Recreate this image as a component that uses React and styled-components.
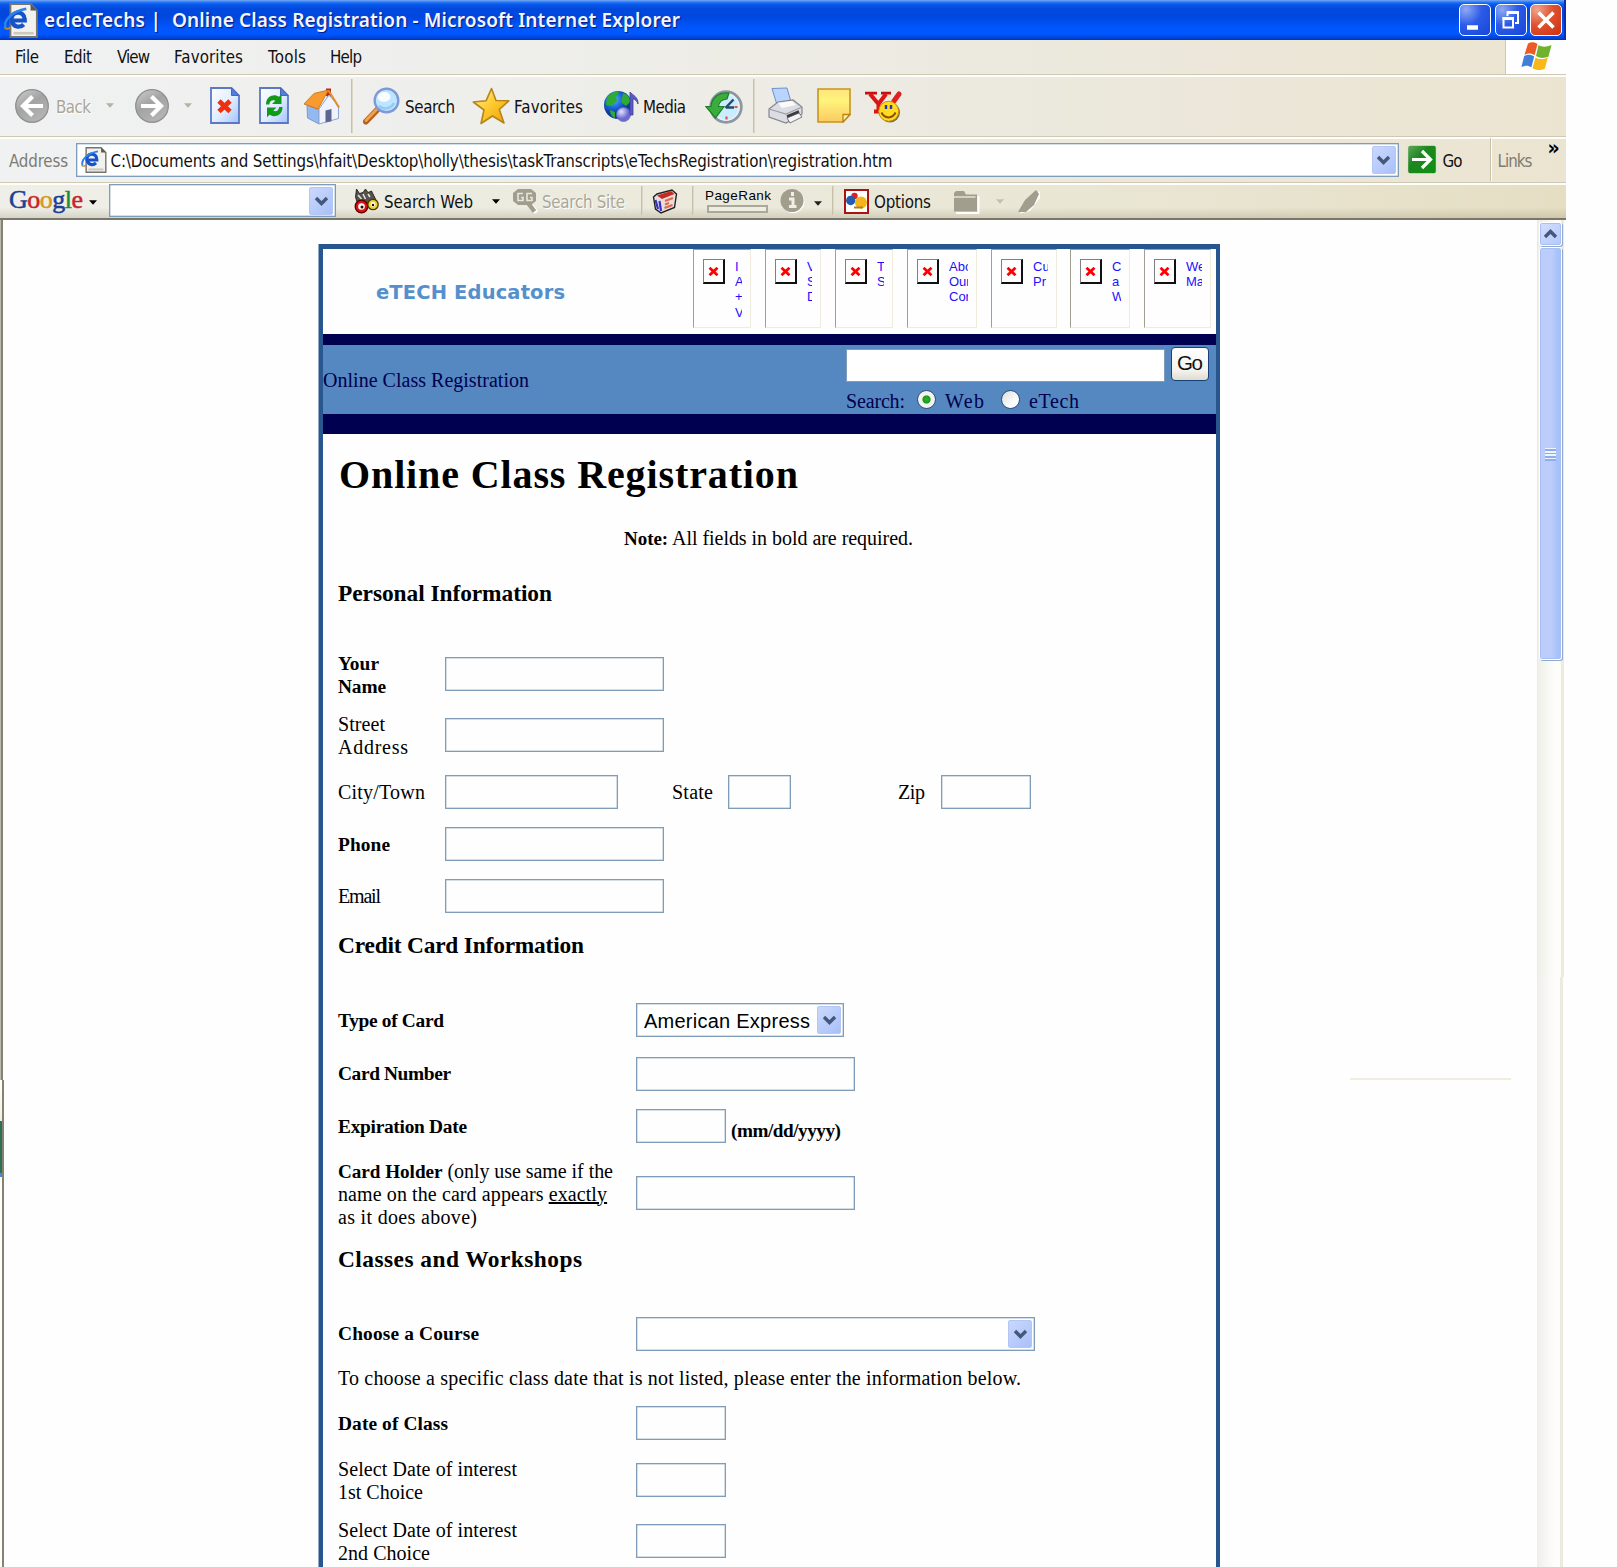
import React, { useLayoutEffect, useRef, useState } from 'react';
import styled, { createGlobalStyle, css } from 'styled-components';

const UI = "'DejaVu Sans Condensed', 'DejaVu Sans', sans-serif";
const SERIF = "'Liberation Serif', serif";
const SANS = "'Liberation Sans', sans-serif";

const GlobalStyle = createGlobalStyle`
  *, *::before, *::after { box-sizing: border-box; }
  body { margin: 0; background: #fefefe; overflow: hidden; }
  h1, h2, p { margin: 0; font-weight: inherit; }
`;

/* ---------- text that is tracked to fill a given measure ---------- */

const Line = styled.span`
  display: block;
  flex: none;
  width: ${(p) => p.$w}px;
  white-space: nowrap;
`;

function Fit({ w, className, children }) {
  const ref = useRef(null);
  const [track, setTrack] = useState(0);
  useLayoutEffect(() => {
    const el = ref.current;
    const gaps = el.textContent.length - 1;
    if (gaps > 0) setTrack((w - el.getBoundingClientRect().width) / gaps);
  }, [w]);
  return (
    <Line $w={w} className={className}>
      <span ref={ref} style={{ letterSpacing: `${track}px` }}>{children}</span>
    </Line>
  );
}

/* ---------- window chrome ---------- */

const Screen = styled.div`
  width: 1617px;
  height: 1567px;
  overflow: hidden;
  background: #fefefe;
`;

const Window = styled.div`
  width: 1566px;
  height: 1567px;
  display: flex;
  flex-direction: column;
  font-family: ${UI};
  font-stretch: condensed;
  font-size: 16.8px;
  color: #111;
`;

const TitleBar = styled.header`
  height: 40px;
  flex: none;
  display: flex;
  align-items: center;
  padding: 0 4px 0 4px;
  background: linear-gradient(180deg, #7ba7ee 0, #2a7dfb 2px, #0a5cee 4px, #0148dc 9px, #0047e0 17px, #0056fb 27px, #0058ff 34px, #0043d8 38px, #0030b4 40px);
  box-shadow: inset -2px 0 0 #0b2fb4;
`;

const TitleText = styled.div`
  display: flex;
  gap: 11px;
  margin: 0 auto 0 6px;
  font: 600 19px 'Noto Sans', 'Open Sans', sans-serif;
  color: #f4f6ff;
  text-shadow: 1px 1px 1px #0a1883;
`;

const WinButton = styled.button`
  width: 32px;
  height: 32px;
  padding: 0;
  margin: 0 0 0 3.5px;
  border: 1.5px solid #fff;
  border-radius: 5px;
  display: grid;
  place-items: center;
  background: ${(p) =>
    p.$close
      ? 'radial-gradient(circle at 20% 15%, #f0a58e, #e0512f 45%, #c93210)'
      : 'radial-gradient(circle at 20% 15%, #8fa9f3, #2c5be8 45%, #1746d8)'};
`;

const Bar = styled.div`
  display: flex;
  flex: none;
  align-items: center;
  height: ${(p) => p.$h}px;
  background: linear-gradient(90deg, #f0f1f2 0, #eeeeea 35%, #ebe7da 75%, ${(p) => p.$end || '#ebe4d0'} 100%);
  border-bottom: 1.5px solid #cfc8b2;
  box-shadow: inset 0 2px 0 #fdfdf9;
`;

const MenuBar = styled(Bar)`
  box-shadow: none;
  padding-left: 15px;
`;

const Menus = styled.nav`
  display: flex;
  margin-right: auto;
`;

const MenuItem = styled(Fit)`
  margin-right: ${(p) => p.$after}px;
`;

const FlagBox = styled.div`
  width: 61px;
  align-self: stretch;
  border-left: 1.5px solid #cfc8b2;
  box-shadow: inset 1px 0 0 #fff;
  background: #fefefe;
  padding: 1px 0 0 15px;
`;

const ButtonBar = styled(Bar)`
  padding-left: 14px;
`;

const AddressBar = styled(Bar)`
  padding-left: 9px;
`;

const GoogleBar = styled(Bar)`
  padding-left: 9px;
  background: linear-gradient(180deg, transparent 70%, rgba(150, 140, 110, 0.28) 100%),
    linear-gradient(90deg, #efefe9 0, #ecebdf 35%, #e9e5d2 75%, #e5dec3 100%);
  border-bottom: 2.5px solid #79766a;
`;

const Slot = styled.span`
  flex: none;
  display: block;
  line-height: 0;
  margin-left: ${(p) => p.$l || 0}px;
  margin-top: ${(p) => p.$t || 0}px;
`;

const Label = styled(Fit)`
  margin-left: ${(p) => p.$l || 0}px;
  margin-top: ${(p) => (p.$t === undefined ? 2 : p.$t)}px;
  ${(p) =>
    p.$off &&
    css`
      color: #aaa798;
      text-shadow: 1px 1px 0 #fff;
    `}
  ${(p) => p.$dim && css`color: #7d7b72;`}
`;

const Rule = styled.span`
  flex: none;
  width: 2px;
  height: ${(p) => p.$h}px;
  margin-left: ${(p) => p.$l}px;
  border-left: 1px solid #c6c1a9;
  background: ${(p) => (p.$lit ? '#fff' : '#dcd8c6')};
`;

const Combo = styled.div`
  flex: none;
  display: flex;
  align-items: center;
  width: ${(p) => p.$w}px;
  height: ${(p) => p.$h}px;
  margin-left: ${(p) => p.$l || 0}px;
  padding: 0 2px 0 ${(p) => p.$pad || 0}px;
  border: 1px solid #7f9db9;
  box-shadow: inset 0 0 0 0.5px #a9bdd0;
  background: #fff;
  & > :last-child { margin-left: auto; }
`;

const DropButton = styled.span`
  display: grid;
  place-items: center;
  width: 24px;
  height: 28px;
  border-radius: 2px;
  border: 1px solid #b4c6f4;
  background: linear-gradient(135deg, #cbd8fb, #b6cafb 60%, #a9c0f8);
`;

const Logo = styled(Fit)`
  font: 26px ${SERIF};
  margin-top: -1px;
`;
const G = styled.span`
  color: ${(p) => p.$c};
  -webkit-text-stroke: 0.5px ${(p) => p.$c};
`;

const RankBox = styled.div`
  flex: none;
  width: 66px;
  margin: 1px 0 0 11px;
  font: 13.5px/12px ${SANS};
  color: #000;
`;
const RankMeter = styled.div`
  width: 61px;
  height: 8px;
  margin: 3px 0 0 2px;
  border: 2px solid #aaa898;
  background: #efede2;
`;

const More = styled.span`
  margin: -23px 0 0 15px;
  font: bold 21px/20px ${UI};
  color: #000;
`;

/* ---------- icons ---------- */

const Chevron = ({ up }) => (
  <svg width="15" height="10" viewBox="0 0 15 10">
    <path d={up ? 'M2 8 7.5 2.5 13 8' : 'M2 2 7.5 7.5 13 2'} fill="none" stroke="#44587c" strokeWidth="3.4" />
  </svg>
);
const Caret = ({ c = '#000' }) => (
  <svg width="8" height="5" viewBox="0 0 8 5"><path d="M0 .3h8L4 4.8z" fill={c} /></svg>
);

const IePage = ({ w, h }) => (
  <svg width={w} height={h} viewBox="0 0 32 33">
    <path d="M6 1h19l6 6v25H6z" fill="#f1f1ee" stroke="#77756c" strokeWidth="1.8" />
    <path d="M25 1v6h6z" fill="#5b5a55" />
    <path d="M9 28.500h19" stroke="#cbc9c0" strokeWidth="2.500" />
    <path d="M19.500 16.500H7.200a6.200 6 0 1 1 12.200-1.500zM7.500 17c1 5.600 7.400 7 11 3.200" fill="none" stroke="#1553c8" strokeWidth="4" />
    <path d="M1.500 23C-1 17 7 8 21 5.500" fill="none" stroke="#2e80ea" strokeWidth="2.400" />
    <path d="M.5 23c1 2 3.500 1.500 5.500 0" fill="none" stroke="#b88a28" strokeWidth="1.800" />
  </svg>
);

const NavCircle = ({ forward }) => (
  <svg width="36" height="36" viewBox="0 0 36 36">
    <defs>
      <linearGradient id="nav" x1="0" y1="0" x2=".6" y2="1">
        <stop offset="0" stopColor="#cfcfcf" /><stop offset=".5" stopColor="#a3a3a3" /><stop offset="1" stopColor="#b4b4b4" />
      </linearGradient>
    </defs>
    <circle cx="18" cy="18" r="16.3" fill="url(#nav)" stroke="#8f8f8f" strokeWidth="1.300" />
    <g transform={forward ? 'translate(36 0) scale(-1 1)' : undefined} fill="none" stroke="#fff" strokeWidth="4.200">
      <path d="M8.500 18H29M18.500 8.500 9 18l9.500 9.500" />
    </g>
  </svg>
);

const PageShape = ({ children }) => (
  <svg width="30" height="37" viewBox="0 0 30 37">
    <defs>
      <linearGradient id="sheet" x1="0" y1="0" x2="1" y2="1">
        <stop offset="0" stopColor="#fff" /><stop offset=".55" stopColor="#e0ecff" /><stop offset="1" stopColor="#a0c2fb" />
      </linearGradient>
    </defs>
    <path d="M1 1h20.500l7.500 7.500V36H1z" fill="url(#sheet)" stroke="#5a78c4" strokeWidth="1.800" />
    <path d="M21.500 1v7.500H29z" fill="#4f7fe0" stroke="#4668b8" />
    {children}
  </svg>
);
const StopIcon = () => (
  <PageShape><path d="M9 14l11 10.500M20 14 9 24.500" stroke="#f0300c" strokeWidth="4.800" /></PageShape>
);
const RefreshIcon = () => (
  <PageShape>
    <g fill="#109a18">
      <path d="M7 17.500c0-6.500 4.500-9.500 9.500-9.200L20 9.800l2.500-2.500v9.700H13l3.300-3.300c-3-1-5.500 0-6 3.800z" />
      <path d="M23.500 20c0 6.500-4.500 9.500-9.500 9.200l-3.500-1.500L8 30.200v-9.700h9.500l-3.300 3.300c3 1 5.500 0 6-3.800z" />
    </g>
  </PageShape>
);
const HomeIcon = () => (
  <svg width="37" height="38" viewBox="0 0 37 38">
    <path d="M23 1.500h5v11l-5-4z" fill="#b62b18" />
    <path d="M4 18 16 23v14L4.500 31z" fill="#94b9f0" stroke="#7d9bcd" />
    <path d="M16 22 26 8l9.500 11v12.500L16 37z" fill="#eef3fd" stroke="#8ea6d4" />
    <path d="M22.500 23.500l6-1.500v12.300l-6 1.300z" fill="#5d6590" />
    <path d="M11 6.500 25.500 3 15 22 1 17z" fill="#f79a2f" stroke="#d67718" />
    <path d="M25.500 3.500 36 20.500" stroke="#e58d31" strokeWidth="2.200" fill="none" />
  </svg>
);
const SearchIcon = () => (
  <svg width="37" height="38" viewBox="0 0 37 38">
    <path d="M14 23 3 34.500" stroke="#b5601c" strokeWidth="6" strokeLinecap="round" />
    <path d="M13.500 22.500 3 33.500" stroke="#f2a04c" strokeWidth="3" strokeLinecap="round" />
    <circle cx="23.500" cy="13.500" r="11.800" fill="#bfe4ff" stroke="#7d9ad6" strokeWidth="2.400" />
    <ellipse cx="21" cy="10" rx="6.500" ry="5" fill="#f6fcff" />
    <path d="M16 19c4 4 12 3 15-3" stroke="#8ecbf8" strokeWidth="2.500" fill="none" />
  </svg>
);
const StarIcon = () => (
  <svg width="38" height="38" viewBox="0 0 38 38">
    <defs>
      <linearGradient id="gold" x1="0" y1="0" x2="1" y2="1">
        <stop offset="0" stopColor="#fff3a0" /><stop offset=".5" stopColor="#fdc92c" /><stop offset="1" stopColor="#e99b10" />
      </linearGradient>
    </defs>
    <path d="M19.500 1.500 24 13.500l12.800.3-9.500 8.700L32 36l-11.500-7L9 36.500l3-13.500L1.300 15l12.700-1.200z" fill="url(#gold)" stroke="#b88415" strokeWidth="1.600" strokeLinejoin="round" />
  </svg>
);
const MediaIcon = () => (
  <svg width="37" height="33" viewBox="0 0 37 33">
    <defs>
      <radialGradient id="globe" cx=".35" cy=".3"><stop offset="0" stopColor="#62b4ff" /><stop offset=".6" stopColor="#1c67d8" /><stop offset="1" stopColor="#123a9c" /></radialGradient>
      <radialGradient id="ball" cx=".35" cy=".3"><stop offset="0" stopColor="#e2e2ff" /><stop offset="1" stopColor="#6c6cd0" /></radialGradient>
    </defs>
    <circle cx="15" cy="15" r="14" fill="url(#globe)" />
    <path d="M4 7C8 2 13 1 16 2l-3 5 1 4-6 5-5-1zM20 3c4 1 7 4 8 8l-5 5-5-4zM7 20l5 2v6c-3-1-5-4-5-8z" fill="#2cab35" />
    <circle cx="20.500" cy="24.500" r="7" fill="url(#ball)" stroke="#6a6ac4" strokeWidth=".8" />
    <path d="M27 25V2c2.500 3 8.500 5 8 12-1.500-4-4-5-5-5v16z" fill="#5a5ac6" stroke="#3d3d98" strokeWidth=".8" />
  </svg>
);
const HistoryIcon = () => (
  <svg width="38" height="36" viewBox="0 0 38 36">
    <circle cx="21" cy="18" r="15.300" fill="#c9ecff" stroke="#8c97a4" strokeWidth="2.800" />
    <circle cx="21" cy="18" r="13" fill="none" stroke="#e9f0f4" strokeWidth="1.500" />
    <path d="M20.500 19l8-8.500M21 18.500h8" stroke="#29496e" strokeWidth="2.500" fill="none" />
    <path d="M32.500 18h-3M21.500 30.500v-3" stroke="#e0583a" strokeWidth="2.200" />
    <path d="M24 4C13 3 6.500 9 6 17.500H.8L10.500 29 19 17.500h-5.500c.5-4.500 3.500-7 8.500-7.500z" fill="#3aad3c" stroke="#1f7d25" strokeWidth="1.200" />
  </svg>
);
const PrinterIcon = () => (
  <svg width="37" height="38" viewBox="0 0 37 38">
    <path d="M5 1.500 20 1l4 14-14 3z" fill="#b9d5ff" stroke="#6f8fcc" />
    <path d="M2 22 11 15l15-2 9 7v7L19 36 2 30z" fill="#dcdde3" stroke="#85868e" strokeWidth="1.200" />
    <path d="M2 22l17 5 16-7" fill="none" stroke="#9c9da6" strokeWidth="1.300" />
    <path d="M11 16l14-2 4 4-14 3z" fill="#fafafa" />
    <path d="M20 31l12-5 3 4-12 6z" fill="#f4f4f4" stroke="#76777f" />
    <path d="M20 29.500l12-5" stroke="#3a3b40" strokeWidth="2.500" />
  </svg>
);
const NoteIcon = () => (
  <svg width="34" height="35" viewBox="0 0 34 35">
    <defs><linearGradient id="memo" x1="0" y1="0" x2="0" y2="1"><stop offset="0" stopColor="#fce47c" /><stop offset=".35" stopColor="#fff47c" /><stop offset="1" stopColor="#fbca62" /></linearGradient></defs>
    <path d="M1 1h32v25.500L26 34H1z" fill="url(#memo)" stroke="#c9951e" strokeWidth="1.600" />
    <path d="M26 34v-7.500h7z" fill="#fff0a8" stroke="#b98414" strokeWidth="1.300" />
  </svg>
);
const SmileyIcon = () => (
  <svg width="38" height="32" viewBox="0 0 38 32">
    <path d="M1 2.200h12M17 2.200h10" fill="none" stroke="#c41010" strokeWidth="2.800" />
    <path d="M6 3l8.500 10L22 3M14.500 11v9M10 20.500h9" fill="none" stroke="#dc1414" strokeWidth="4" />
    <path d="M30 10 35 3" stroke="#e02020" strokeWidth="5" strokeLinecap="round" />
    <circle cx="26" cy="21.500" r="10" fill="#7a6c48" />
    <circle cx="24.700" cy="20.300" r="10" fill="#ffdc1e" stroke="#c98d10" />
    <path d="M22 14v4M27 14v4" stroke="#2a35b0" strokeWidth="2.400" />
    <path d="M17.500 21.500c3 6.500 11 6.500 14 0" fill="none" stroke="#8c4a08" strokeWidth="2" />
  </svg>
);
const FlagIcon = () => (
  <svg width="31" height="30" viewBox="0 0 31 30">
    <path d="M7 2.500c3.500-2 6.500-1.500 9.500.5l-2.800 11C10.500 12 7.500 11.800 3.500 13.800z" fill="#ee5a24" />
    <path d="M17.500 4c3 2 7.500 2.500 13 0l-3 11.500c-4.500 2.200-9 1.800-12.500-.5z" fill="#6fb32a" />
    <path d="M3.200 15c4-2 7-1.500 10 .5l-2.800 10.800c-3-2-6-2.300-10-.3z" fill="#3f7fdc" />
    <path d="M14.500 16.500c3 1.800 7.500 2.300 12.300.2l-3 11c-4.500 2-8.800 1.500-12.300-.5z" fill="#f8b81a" />
  </svg>
);
const GoArrow = () => (
  <svg width="30" height="31" viewBox="0 0 30 31">
    <defs><linearGradient id="go" x1="0" y1="0" x2="1" y2="1"><stop offset="0" stopColor="#5fa85a" /><stop offset=".4" stopColor="#1e8620" /><stop offset="1" stopColor="#109010" /></linearGradient></defs>
    <rect x=".7" y="1.200" width="28.600" height="28.600" rx="2.500" fill="url(#go)" stroke="#e4efdc" />
    <path d="M5 15.500h18M15 7l8.500 8.500L15 24" fill="none" stroke="#fff" strokeWidth="3.200" />
  </svg>
);
const Binoculars = () => (
  <svg width="25" height="25" viewBox="0 0 25 25">
    <path d="M2.500 0l3 4.500L9 3.500 11.500 0l2.500 3.500L17.500 2l1.500 3 3 6-6 5H4L1.500 8z" fill="#55534c" stroke="#111" strokeWidth=".8" />
    <path d="M4 6l3.500 4M9 5l2.500 5M14 5l2 3" stroke="#e8e6dc" strokeWidth="1.500" />
    <circle cx="7.500" cy="17.500" r="6.300" fill="#d11" stroke="#500" strokeWidth="1.300" /><circle cx="7.500" cy="17.500" r="3.300" fill="#fff" /><circle cx="8" cy="18" r="1.500" fill="#111" />
    <circle cx="19" cy="15.500" r="5.200" fill="#f2d31c" stroke="#443a00" strokeWidth="1.300" /><circle cx="19" cy="15.500" r="2.400" fill="#fff" /><circle cx="19" cy="16" r="1.200" fill="#111" />
  </svg>
);
const SiteSearch = () => (
  <svg width="27" height="26" viewBox="0 0 27 26">
    <path d="M18 17l5 6.500" stroke="#fff" strokeWidth="4.500" transform="translate(1.500 1)" />
    <path d="M6 1h13l5 4v8l-5 4H6l-5-4V5z" fill="#a19e8e" />
    <path d="M16 15l6.500 8.500" stroke="#a19e8e" strokeWidth="4.500" />
    <path d="M11 5.500H6v7h5V9.500H9M20 5.500h-5v7h5V9.500h-2" fill="none" stroke="#e9e7da" strokeWidth="1.600" />
  </svg>
);
const NewsIcon = () => (
  <svg width="26" height="25" viewBox="0 0 26 25">
    <path d="M1.500 8 5 5l15-4 4.500 4-2 13.500L9 24l-5.500-4z" fill="#e9dcdc" stroke="#222" strokeWidth="1.400" />
    <path d="M5 6.500 19 2l3.500 3L10 10z" fill="#c72a22" />
    <path d="M3.500 11l2.500 9M7.500 12l1.500 10" stroke="#3434c0" strokeWidth="2.200" />
    <path d="M13 12l8-3M13 15.500l4-1.500M12.500 19l8-3" stroke="#e06a48" strokeWidth="2.200" />
  </svg>
);
const InfoIcon = () => (
  <svg width="25" height="26" viewBox="0 0 25 26">
    <circle cx="13" cy="13.500" r="11.500" fill="#fff" /><circle cx="12" cy="12.500" r="11.500" fill="#a19e8e" />
    <path d="M12.500 4v4M9 11h4v7M9 18.500h7.500" stroke="#f1efe4" strokeWidth="3" fill="none" />
  </svg>
);
const OptionsIcon = () => (
  <svg width="25" height="25" viewBox="0 0 25 25">
    <rect x="1" y="1" width="23" height="23" fill="#fff" stroke="#a81414" strokeWidth="2" />
    <circle cx="10.500" cy="7" r="3.200" fill="#dc2222" /><circle cx="6.700" cy="11.500" r="4.700" fill="#245bb0" /><circle cx="17" cy="13.500" r="6" fill="#f4b41a" />
    <path d="M10 18.500h9" stroke="#b57e11" strokeWidth="2" />
  </svg>
);
const FolderIcon = () => (
  <svg width="27" height="25" viewBox="0 0 27 25">
    <path d="M3 24h22.500V7" fill="none" stroke="#fff" strokeWidth="2" />
    <path d="M1 22.500V4l2-2h8l2 3.500h11v17z" fill="#a19e8e" /><path d="M1 8h21.500" stroke="#e6e3d4" strokeWidth="1.500" />
  </svg>
);
const PenIcon = () => (
  <svg width="25" height="25" viewBox="0 0 25 25">
    <path d="M3 24.500 10 12 23 2v7L13 22z" fill="#fff" /><path d="M1 23 8 11 19 1l3 4-5 11-8 7z" fill="#a19e8e" />
  </svg>
);
const MinGlyph = () => <svg width="26" height="26" viewBox="0 0 26 26"><path d="M5 20.500h11" stroke="#fff" strokeWidth="4.500" /></svg>;
const RestoreGlyph = () => (
  <svg width="26" height="26" viewBox="0 0 26 26" fill="none" stroke="#fff">
    <path d="M9.500 9V5.500H20V16h-3" strokeWidth="2" /><path d="M9 5.500h12" strokeWidth="3" />
    <path d="M5.500 11.500H15v9H5.500z" strokeWidth="2" /><path d="M4.500 11.500H16" strokeWidth="3" />
  </svg>
);
const CloseGlyph = () => <svg width="26" height="26" viewBox="0 0 26 26"><path d="M5.500 5.500l15 15M20.500 5.500l-15 15" stroke="#fff" strokeWidth="3.600" /></svg>;

/* ---------- viewport ---------- */

const Viewport = styled.div`
  flex: 1;
  min-height: 0;
  display: flex;
  background: #fefefe;
`;

const LeftEdge = styled.div`
  width: 4px;
  flex: none;
  display: flex;
  flex-direction: column;
`;
const EdgePiece = styled.div`
  width: ${(p) => p.$w}px;
  height: ${(p) => p.$h}px;
  flex: none;
  background: ${(p) => p.$bg};
  border-right: ${(p) => p.$edge}px solid #85836f;
`;

const Canvas = styled.main`
  flex: 1;
  display: flex;
  align-items: flex-start;
  padding: 24px 0 0 315px;
  overflow: hidden;
`;

const Sheet = styled.div`
  width: 901px;
  flex: none;
  height: 1400px;
  border: 4px solid #28568f;
  border-top-width: 5px;
  box-shadow: -1px 0 0 #93aac6;
  background: #fefefe;
  font-family: ${SERIF};
  font-stretch: normal;
  font-size: 20px;
  line-height: 23px;
  color: #000;
`;

const StrayRule = styled.div`
  width: 161px;
  height: 2px;
  flex: none;
  margin: 834px 0 0 130px;
  background: #f1eee0;
`;

const Scrollbar = styled.div`
  width: 29px;
  flex: none;
`;
const Track = styled.div`
  height: 757px;
  width: 27px;
  padding-top: 2px;
  border-left: 1px solid #eceadd;
  border-right: 3px solid #eeebdd;
  background: linear-gradient(90deg, #f0efe9, #fdfefa 75%);
`;
const TrackEnd = styled.div`
  height: 600px;
  width: 26px;
  border-right: 3px solid #edebe0;
  background: linear-gradient(90deg, #f0eeea, #fdfefa 75%);
`;
const blueBlock = css`
  width: 23px;
  margin-left: 0.5px;
  border: 1.5px solid #fff;
  border-radius: 3px;
  display: grid;
  place-items: center;
  box-shadow: 1px 1px 0 #8fa9cf, inset 0 0 0 1px #a9bff3;
`;
const UpButton = styled.div`
  ${blueBlock}
  height: 24px;
  background: linear-gradient(135deg, #d3dffc, #b4c9fb);
`;
const Thumb = styled.div`
  ${blueBlock}
  height: 413px;
  margin-top: 1px;
  padding-top: 2px;
  background: linear-gradient(90deg, #bccdfb 0, #bdcdfb 55%, #a6c2fb 85%);
`;
const Grip = styled.div`
  width: 11px;
  height: 13px;
  background: repeating-linear-gradient(180deg, #eef4fe 0 1.5px, #8caef0 1.5px 3.2px);
`;

/* ---------- page header ---------- */

const Banner = styled.div`
  height: 85px;
  display: flex;
`;
const Brand = styled(Fit)`
  margin: 32px 128px 0 53px;
  font: bold 19.5px/24px 'DejaVu Sans', sans-serif;
  color: #5590cd;
`;
const Missing = styled.a`
  flex: none;
  display: flex;
  width: ${(p) => p.$w}px;
  height: 79px;
  margin-right: ${(p) => p.$gap}px;
  padding: 9px 8px 0 9px;
  border: 1px solid #efecdd;
  border-top: 1px solid #a29f90;
  border-left: 1.5px solid #a29f90;
`;
const MissingGlyph = styled.span`
  flex: none;
  display: grid;
  place-items: center;
  width: 22px;
  height: 25px;
  border: 1.5px solid #808080;
  border-right: 2px solid #111;
  border-bottom: 2px solid #111;
`;
const Alt = styled.span`
  margin-left: 10px;
  overflow: hidden;
  white-space: pre;
  font: 13px/15.2px ${SANS};
  color: #1c10ff;
`;

const Strip = styled.div`
  height: ${(p) => p.$h}px;
  background: #000050;
`;
const SearchBand = styled.div`
  height: 69px;
  display: flex;
  justify-content: space-between;
  background: #5588c1;
  color: #00004e;
`;
const Crumb = styled(Fit)`
  margin-top: 24px;
`;
const SearchBox = styled.div`
  width: 370px;
`;
const SearchLine = styled.div`
  display: flex;
  margin-top: 2px;
`;
const Query = styled.div`
  width: 319px;
  height: 33px;
  margin: 2px 6px 0 0;
  border: 1px solid #7f9db9;
  background: #fff;
`;
const GoButton = styled.div`
  width: 38px;
  height: 34px;
  padding: 3px 0 0 5px;
  border: 1.500px solid #16427a;
  border-radius: 4px;
  background: linear-gradient(180deg, #fff, #f4f3ee 70%, #dedbd0);
  font: 20.5px/24px ${SANS};
  color: #111;
`;
const RadioLine = styled.div`
  display: flex;
  align-items: center;
  height: 25px;
  margin-top: 7px;
`;
const Radio = styled.span`
  width: 19px;
  height: 19px;
  flex: none;
  margin: -5px 9px 0 ${(p) => p.$l}px;
  border: 1.5px solid #2a5482;
  border-radius: 50%;
  background: ${(p) =>
    p.$on
      ? 'radial-gradient(circle, #30b030 0, #1d9a1d 3.6px, #f2f2ee 4.6px)'
      : 'linear-gradient(135deg, #dcdcd6, #fff 70%)'};
`;

/* ---------- form ---------- */

const Form = styled.div`
  padding: 18px 0 0 15px;
`;
const Title = styled.h1`
  margin-left: 1px;
  font-size: 40px;
  line-height: 46px;
  font-weight: bold;
`;
const Note = styled.p`
  margin: 29px 0 30px 286px;
  b { font-size: 19px; }
`;
const Section = styled.h2`
  height: ${(p) => p.$h}px;
  padding-top: ${(p) => p.$top}px;
  font-size: 23.4px;
  line-height: 27px;
  font-weight: bold;
`;
const Row = styled.div`
  display: grid;
  grid-template-columns: ${(p) => (p.$wide ? '298px' : '107px')} 1fr;
  align-items: center;
  height: ${(p) => p.$h}px;
`;
const Caption = styled.label`
  padding-top: ${(p) => (p.$multi ? 2 : 0)}px;
  font-weight: ${(p) => (p.$bold ? 'bold' : 'normal')};
  font-size: ${(p) => (p.$bold ? 19.4 : 20)}px;
  b { font-size: 19.2px; }
`;
const Controls = styled.div`
  display: flex;
  align-items: center;
`;
const Field = styled.input`
  display: block;
  width: ${(p) => p.$w}px;
  height: 34px;
  padding: 0 4px;
  border: 1px solid #7f9db9;
  border-radius: 0;
  box-shadow: inset 0 0 0 0.5px #a9bdd0;
  background: #fefefe;
`;
const Inline = styled(Fit)`
  margin: 0 ${(p) => p.$r || 0}px 0 ${(p) => p.$l}px;
`;
const Hint = styled(Fit)`
  margin: 9px 0 0 5px;
  font-weight: bold;
  font-size: 19.2px;
`;
const Choice = styled(Fit)`
  margin-top: 1px;
  font: 20px/24px ${SANS};
`;
const Help = styled.p`
  height: 36px;
  padding-top: 6px;
`;

const missing = [
  [58, 14, 'I\nA\n+\nV'],
  [56, 14, 'V\nS\nD'],
  [58, 14, 'T\nS'],
  [70, 14, 'Abo\nOur\nCor'],
  [66, 13, 'Cu\nPr'],
  [60, 14, 'C\na\nW'],
  [67, 0, 'We\nMa'],
];

const menus = [
  ['File', 24, 25], ['Edit', 28, 25], ['View', 33, 24], ['Favorites', 69, 25], ['Tools', 38, 24], ['Help', 32, 0],
];

function Entry({ h, wide, bold, lines, children }) {
  return (
    <Row $h={h} $wide={wide}>
      <Caption $bold={bold} $multi={lines.length > 1}>
        {lines.map(([text, w], i) => <Fit key={i} w={w}>{text}</Fit>)}
      </Caption>
      <Controls>{children}</Controls>
    </Row>
  );
}

export default function App() {
  return (
    <Screen>
      <GlobalStyle />
      <Window>
        <TitleBar>
          <IePage w={34} h={35} />
          <TitleText>
            <Fit w={117}>eclecTechs |</Fit>
            <Fit w={508}>Online Class Registration - Microsoft Internet Explorer</Fit>
          </TitleText>
          <WinButton><MinGlyph /></WinButton>
          <WinButton><RestoreGlyph /></WinButton>
          <WinButton $close><CloseGlyph /></WinButton>
        </TitleBar>

        <MenuBar $h={35}>
          <Menus>
            {menus.map(([name, w, after]) => <MenuItem key={name} w={w} $after={after}>{name}</MenuItem>)}
          </Menus>
          <FlagBox><FlagIcon /></FlagBox>
        </MenuBar>

        <ButtonBar $h={62}>
          <Slot $t={1}><NavCircle /></Slot>
          <Label w={35} $l={6} $off>Back</Label>
          <Slot $l={15} $t={-1}><Caret c="#b5b2a4" /></Slot>
          <Slot $l={20} $t={1}><NavCircle forward /></Slot>
          <Slot $l={14} $t={-1}><Caret c="#b5b2a4" /></Slot>
          <Slot $l={18}><StopIcon /></Slot>
          <Slot $l={19}><RefreshIcon /></Slot>
          <Slot $l={14}><HomeIcon /></Slot>
          <Rule $h={54} $l={11} />
          <Slot $l={10} $t={1}><SearchIcon /></Slot>
          <Label w={50} $l={5}>Search</Label>
          <Slot $l={17} $t={1}><StarIcon /></Slot>
          <Label w={69} $l={4}>Favorites</Label>
          <Slot $l={20} $t={2}><MediaIcon /></Slot>
          <Label w={43} $l={3}>Media</Label>
          <Slot $l={19} $t={2}><HistoryIcon /></Slot>
          <Rule $h={54} $l={10} />
          <Slot $l={12}><PrinterIcon /></Slot>
          <Slot $l={13}><NoteIcon /></Slot>
          <Slot $l={13} $t={2}><SmileyIcon /></Slot>
        </ButtonBar>

        <AddressBar $h={46}>
          <Label w={59} $dim>Address</Label>
          <Combo $w={1323} $h={34} $l={7.5} $pad={4}>
            <IePage w={26} h={26} />
            <Label w={782} $l={4} $t={3}>C:\Documents and Settings\hfait\Desktop\holly\thesis\taskTranscripts\eTechsRegistration\registration.htm</Label>
            <DropButton><Chevron /></DropButton>
          </Combo>
          <Slot $l={8}><GoArrow /></Slot>
          <Label w={20} $l={6}>Go</Label>
          <Rule $h={43} $l={27} $lit />
          <Label w={35} $l={6} $dim>Links</Label>
          <More>»</More>
        </AddressBar>

        <GoogleBar $h={37}>
          <Logo w={74}>
            <G $c="#1c3f94">G</G><G $c="#c8232c">o</G><G $c="#d39a1c">o</G><G $c="#1c3f94">g</G><G $c="#1e8a3a">l</G><G $c="#c8232c">e</G>
          </Logo>
          <Slot $l={6} $t={2}><Caret /></Slot>
          <Combo $w={227} $h={33} $l={12}><DropButton><Chevron /></DropButton></Combo>
          <Slot $l={18} $t={1}><Binoculars /></Slot>
          <Label w={89} $l={5}>Search Web</Label>
          <Slot $l={19}><Caret /></Slot>
          <Slot $l={12} $t={1}><SiteSearch /></Slot>
          <Label w={83} $l={3} $off>Search Site</Label>
          <Rule $h={29} $l={16} />
          <Slot $l={9} $t={1}><NewsIcon /></Slot>
          <Rule $h={29} $l={14} />
          <RankBox><Fit w={66}>PageRank</Fit><RankMeter /></RankBox>
          <Slot $l={9} $t={1}><InfoIcon /></Slot>
          <Slot $l={9} $t={5}><Caret c="#222" /></Slot>
          <Rule $h={29} $l={10} />
          <Slot $l={10} $t={1}><OptionsIcon /></Slot>
          <Label w={57} $l={5}>Options</Label>
          <Slot $l={22} $t={1}><FolderIcon /></Slot>
          <Slot $l={16}><Caret c="#c3c0b2" /></Slot>
          <Slot $l={13} $t={1}><PenIcon /></Slot>
        </GoogleBar>

        <Viewport>
          <LeftEdge>
            <EdgePiece $w={3} $h={860} $bg="#bdbaaf" $edge={2} />
            <EdgePiece $w={4} $h={41} $bg="linear-gradient(#fff, #f0efe2)" $edge={2} />
            <EdgePiece $w={4} $h={52} $bg="#2f6f58" $edge={2} />
            <EdgePiece $w={4} $h={4} $bg="#4a84dc" $edge={2} />
            <EdgePiece $w={4} $h={400} $bg="#fefefe" $edge={2} />
          </LeftEdge>
          <Canvas>
            <Sheet>
              <Banner>
                <Brand w={189}>eTECH Educators</Brand>
                {missing.map(([w, gap, text], i) => (
                  <Missing key={i} $w={w} $gap={gap}>
                    <MissingGlyph>
                      <svg width="11" height="9" viewBox="0 0 11 9"><path d="M1.500 .8 9.500 8.200M9.500 .8l-8 7.400" stroke="#f00" strokeWidth="2.800" /></svg>
                    </MissingGlyph>
                    <Alt>{text}</Alt>
                  </Missing>
                ))}
              </Banner>
              <Strip $h={11} />
              <SearchBand>
                <Crumb w={206}>Online Class Registration</Crumb>
                <SearchBox>
                  <SearchLine><Query /><GoButton><Fit w={26}>Go</Fit></GoButton></SearchLine>
                  <RadioLine>
                    <Fit w={59}>Search:</Fit>
                    <Radio $on $l={12} />
                    <Fit w={39}>Web</Fit>
                    <Radio $l={17} />
                    <Fit w={50}>eTech</Fit>
                  </RadioLine>
                </SearchBox>
              </SearchBand>
              <Strip $h={20} />

              <Form>
                <Title><Fit w={459}>Online Class Registration</Fit></Title>
                <Note><Fit w={289}><b>Note:</b> All fields in bold are required.</Fit></Note>

                <Section $h={64} $top={0}><Fit w={214}>Personal Information</Fit></Section>
                <Entry h={60} bold lines={[['Your', 41], ['Name', 48]]}><Field $w={219} /></Entry>
                <Entry h={62} lines={[['Street', 47], ['Address', 70]]}><Field $w={219} /></Entry>
                <Entry h={52} lines={[['City/Town', 87]]}>
                  <Field $w={173} />
                  <Inline w={41} $l={54} $r={15}>State</Inline>
                  <Field $w={63} />
                  <Inline w={27} $l={107} $r={16}>Zip</Inline>
                  <Field $w={90} />
                </Entry>
                <Entry h={52} bold lines={[['Phone', 52]]}><Field $w={219} /></Entry>
                <Entry h={52} lines={[['Email', 43]]}><Field $w={219} /></Entry>

                <Section $h={71} $top={10}><Fit w={246}>Credit Card Information</Fit></Section>
                <Entry h={54} wide bold lines={[['Type of Card', 106]]}>
                  <Combo $w={208} $h={34} $pad={7}>
                    <Choice w={166}>American Express</Choice>
                    <DropButton><Chevron /></DropButton>
                  </Combo>
                </Entry>
                <Entry h={53} wide bold lines={[['Card Number', 113]]}><Field $w={219} /></Entry>
                <Entry h={52} wide bold lines={[['Expiration Date', 129]]}>
                  <Field $w={90} /><Hint w={110}>(mm/dd/yyyy)</Hint>
                </Entry>
                <Entry
                  h={82}
                  wide
                  lines={[
                    [<React.Fragment key="a"><b>Card Holder</b> (only use same if the</React.Fragment>, 275],
                    [<React.Fragment key="b">name on the card appears <u>exactly</u></React.Fragment>, 269],
                    ['as it does above)', 139],
                  ]}
                >
                  <Field $w={219} />
                </Entry>

                <Section $h={72} $top={12}><Fit w={244}>Classes and Workshops</Fit></Section>
                <Entry h={55} wide bold lines={[['Choose a Course', 141]]}>
                  <Combo $w={399} $h={34}><DropButton><Chevron /></DropButton></Combo>
                </Entry>
                <Help><Fit w={683}>To choose a specific class date that is not listed, please enter the information below.</Fit></Help>
                <Entry h={52} wide bold lines={[['Date of Class', 110]]}><Field $w={90} /></Entry>
                <Entry h={61} wide lines={[['Select Date of interest', 179], ['1st Choice', 85]]}><Field $w={90} /></Entry>
                <Entry h={62} wide lines={[['Select Date of interest', 179], ['2nd Choice', 92]]}><Field $w={90} /></Entry>
              </Form>
            </Sheet>
            <StrayRule />
          </Canvas>
          <Scrollbar>
            <Track>
              <UpButton><Chevron up /></UpButton>
              <Thumb><Grip /></Thumb>
            </Track>
            <TrackEnd />
          </Scrollbar>
        </Viewport>
      </Window>
    </Screen>
  );
}
